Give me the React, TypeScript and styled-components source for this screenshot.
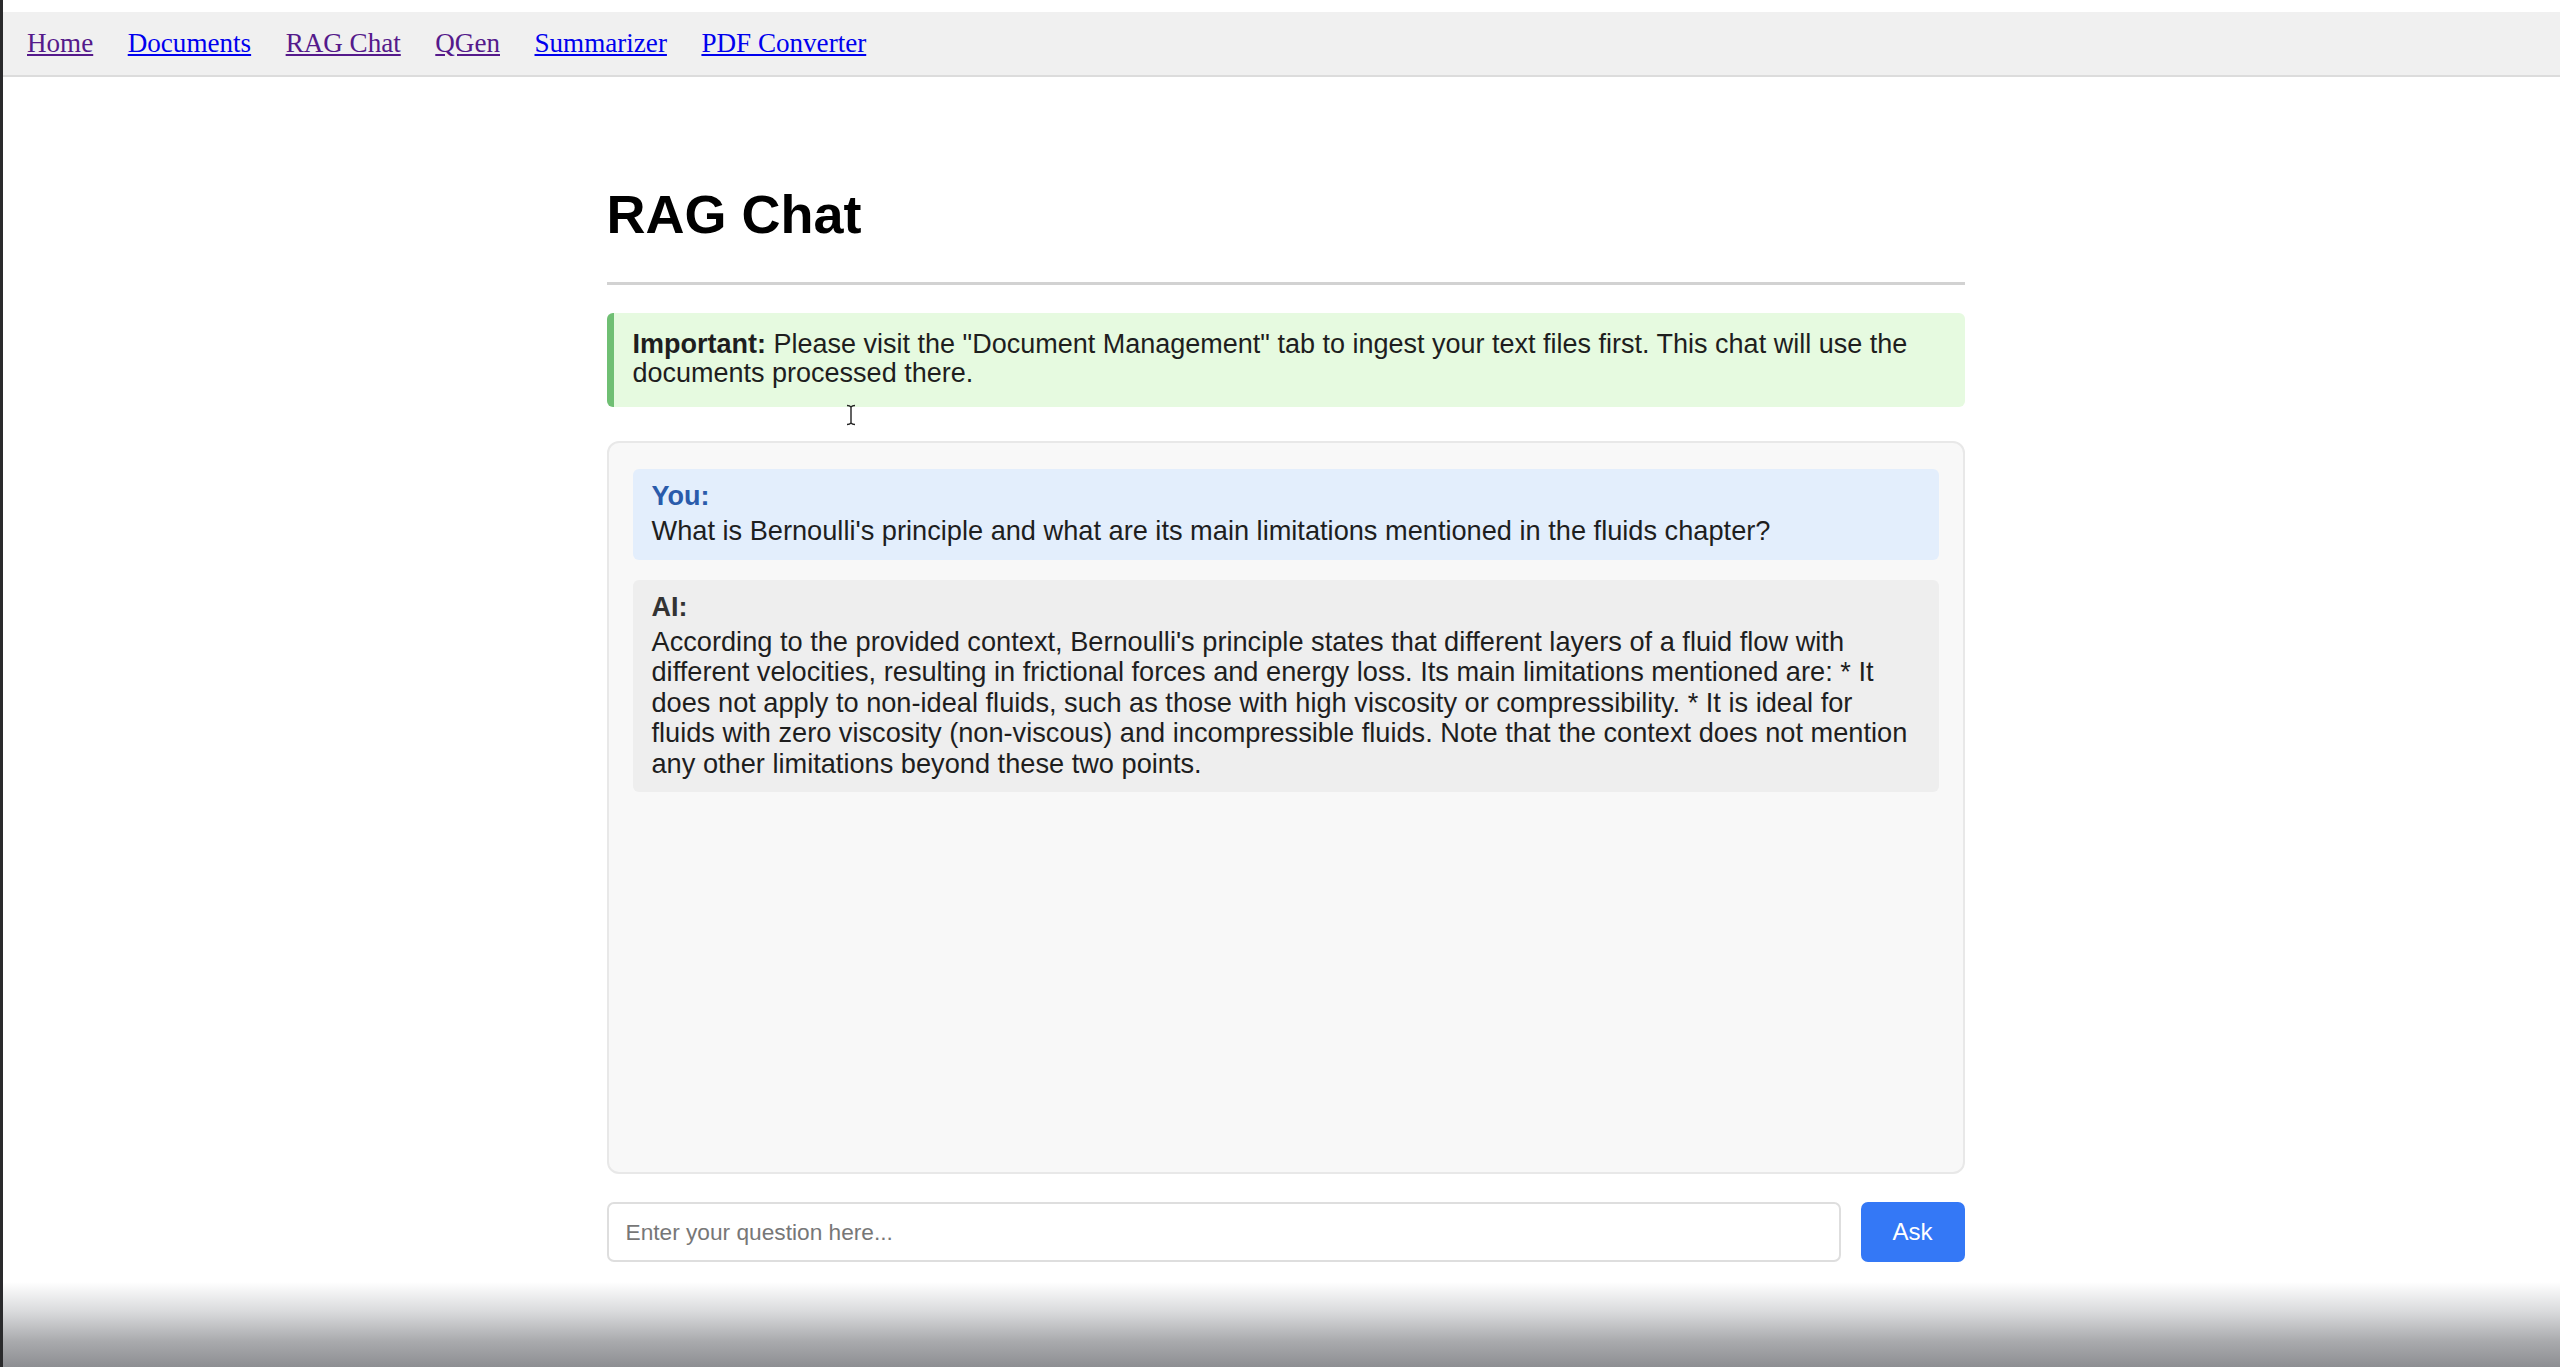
import React from 'react';
import styled, { createGlobalStyle } from 'styled-components';

const GlobalStyle = createGlobalStyle`
  html, body {
    margin: 0;
    padding: 0;
    background: #ffffff;
  }
  * {
    box-sizing: border-box;
  }
`;

const SANS = `"Liberation Sans", Arial, Helvetica, sans-serif`;

const NAV_LINKS = [
  { label: 'Home', visited: true },
  { label: 'Documents', visited: false },
  { label: 'RAG Chat', visited: true },
  { label: 'QGen', visited: true },
  { label: 'Summarizer', visited: false },
  { label: 'PDF Converter', visited: false },
];

const App = () => {
  return (
    <Screen>
      <GlobalStyle />
      <TopGap />
      <Nav>
        {NAV_LINKS.map((link) => (
          <NavLink key={link.label} href="#" $visited={link.visited}>
            {link.label}
          </NavLink>
        ))}
      </Nav>
      <Main>
        <Title>RAG Chat</Title>
        <Notice>
          <strong>Important: </strong>Please visit the "Document Management" tab to ingest your
          text files first. This chat will use the documents processed there.
        </Notice>
        <ChatBox>
          <Message $from="user">
            <Sender $from="user">You:</Sender>
            <MessageText>
              What is Bernoulli's principle and what are its main limitations mentioned in the
              fluids chapter?
            </MessageText>
          </Message>
          <Message $from="ai">
            <Sender $from="ai">AI:</Sender>
            <MessageText>
              According to the provided context, Bernoulli's principle states that different layers
              of a fluid flow with different velocities, resulting in frictional forces and energy
              loss. Its main limitations mentioned are: * It does not apply to non-ideal fluids,
              such as those with high viscosity or compressibility. * It is ideal for fluids with
              zero viscosity (non-viscous) and incompressible fluids. Note that the context does
              not mention any other limitations beyond these two points.
            </MessageText>
          </Message>
        </ChatBox>
        <AskRow>
          <QuestionInput placeholder="Enter your question here..." />
          <AskButton>Ask</AskButton>
        </AskRow>
      </Main>
      <BottomShade />
      <TextCursor>
        <svg width="10" height="22" viewBox="0 0 10 22">
          <path
            d="M1 1.5 C3 1.5 4.2 2 5 3 C5.8 2 7 1.5 9 1.5 M5 3 V19 M1 20.5 C3 20.5 4.2 20 5 19 C5.8 20 7 20.5 9 20.5"
            fill="none"
            stroke="#222"
            strokeWidth="1.4"
          />
        </svg>
      </TextCursor>
    </Screen>
  );
};

const Screen = styled.div`
  position: relative;
  display: flex;
  flex-direction: column;
  min-height: 100vh;
  border-left: 3px solid #2a2a2c;
`;

const TopGap = styled.div`
  height: 12px;
  background: #ffffff;
`;

const Nav = styled.nav`
  display: flex;
  align-items: center;
  gap: 34.5px;
  height: 65px;
  padding: 0 24px;
  background: #f0f0f0;
  border-bottom: 2px solid #dcdcdc;
`;

const NavLink = styled.a<{ $visited: boolean }>`
  font-family: "Liberation Serif", "Times New Roman", serif;
  font-size: 27.1px;
  color: ${({ $visited }) => ($visited ? '#551a8b' : '#0000ee')};
  text-decoration: underline;
`;

const Main = styled.main`
  width: 1358px;
  margin: 106px auto 0;
  position: relative;
  left: 4px;
  font-family: ${SANS};
  color: #222;
`;

const Title = styled.h1`
  margin: 0;
  padding-bottom: 37px;
  font-size: 54px;
  line-height: 62px;
  font-weight: 700;
  color: #000;
  border-bottom: 3px solid #d2d2d2;
`;

const Notice = styled.div`
  margin-top: 28px;
  padding: 17px 19px 19px;
  background: #e6fae0;
  border-left: 7px solid #6fbf73;
  border-radius: 6px;
  font-size: 27px;
  line-height: 29px;
  color: #1e1e1e;

  strong {
    font-weight: 700;
  }
`;

const ChatBox = styled.section`
  display: flex;
  flex-direction: column;
  gap: 20px;
  height: 733px;
  margin-top: 34px;
  padding: 26px 24px;
  background: #f8f8f8;
  border: 2px solid #e8e8e8;
  border-radius: 12px;
`;

const Message = styled.div<{ $from: 'user' | 'ai' }>`
  padding: 12px 19px 13px;
  border-radius: 6px;
  background: ${({ $from }) => ($from === 'user' ? '#e3eefc' : '#eeeeee')};
`;

const Sender = styled.div<{ $from: 'user' | 'ai' }>`
  margin-bottom: 4px;
  font-size: 27px;
  line-height: 31px;
  font-weight: 700;
  color: ${({ $from }) => ($from === 'user' ? '#2a5bab' : '#333333')};
`;

const MessageText = styled.div`
  font-size: 27.2px;
  line-height: 30.5px;
  color: #1e1e1e;
`;

const AskRow = styled.div`
  display: flex;
  gap: 20px;
  margin-top: 28px;
`;

const QuestionInput = styled.input`
  flex: 1;
  height: 60px;
  padding: 0 17px;
  border: 2px solid #dedede;
  border-radius: 7px;
  background: #ffffff;
  font-family: ${SANS};
  font-size: 22.7px;
  color: #222;
  outline: none;

  &::placeholder {
    color: #777777;
  }
`;

const AskButton = styled.button`
  width: 104px;
  height: 60px;
  border: none;
  border-radius: 7px;
  background: #3478f6;
  color: #ffffff;
  font-family: ${SANS};
  font-size: 24px;
  cursor: pointer;
`;

const BottomShade = styled.div`
  margin-top: auto;
  height: 85px;
  background: linear-gradient(to bottom, #ffffff 0%, #d9dadc 35%, #a9aaad 70%, #8d8e92 100%);
`;

const TextCursor = styled.div`
  position: absolute;
  left: 843px;
  top: 404px;
  width: 10px;
  height: 22px;
  pointer-events: none;
`;

export default App;
